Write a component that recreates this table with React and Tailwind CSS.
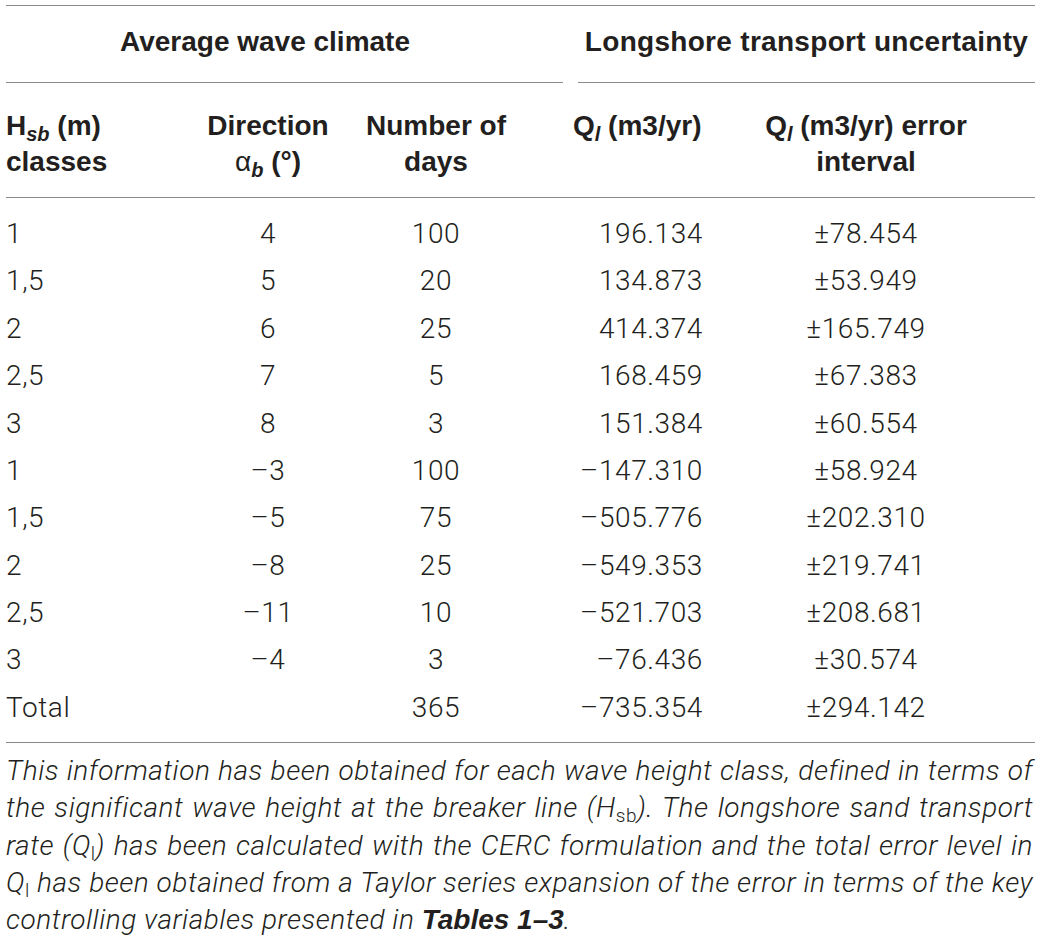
import React from "react";

const rows = [
  ["1", "4", "100", "196.134", "±78.454"],
  ["1,5", "5", "20", "134.873", "±53.949"],
  ["2", "6", "25", "414.374", "±165.749"],
  ["2,5", "7", "5", "168.459", "±67.383"],
  ["3", "8", "3", "151.384", "±60.554"],
  ["1", "–3", "100", "–147.310", "±58.924"],
  ["1,5", "–5", "75", "–505.776", "±202.310"],
  ["2", "–8", "25", "–549.353", "±219.741"],
  ["2,5", "–11", "10", "–521.703", "±208.681"],
  ["3", "–4", "3", "–76.436", "±30.574"],
  ["Total", "", "365", "–735.354", "±294.142"],
];

const grid = "grid grid-cols-[174px_176px_160px_187px_332px]";
const bodyFont = { fontFamily: "Roboto, 'Liberation Sans', sans-serif" };
const boldFont = { fontFamily: "'Liberation Sans', Arial, sans-serif" };

function Sub({ children, className = "" }) {
  return (
    <span className={"relative top-[6px] text-[20px] leading-none " + className}>
      {children}
    </span>
  );
}

export default function App() {
  return (
    <div className="w-[1043px] h-[940px] bg-white text-[#231f20] overflow-hidden">
      <div className="ml-[6px] w-[1029px] pt-[5px]">
        <div className="h-px bg-[#8a8a8a]" />

        {/* group header row */}
        <div className="flex font-bold text-[28px] leading-[36px]" style={boldFont}>
          <div className="w-[557px] border-b border-[#8a8a8a] pt-[18px] pb-[22px] pr-[39px] text-center">
            Average wave climate
          </div>
          <div className="w-[15px]" />
          <div className="flex-1 border-b border-[#8a8a8a] pt-[18px] pb-[22px] text-center whitespace-nowrap tracking-[0.3px]">
            Longshore transport uncertainty
          </div>
        </div>

        {/* column header row */}
        <div
          className={grid + " border-b border-[#8a8a8a] pt-[25px] pb-[17px] font-bold text-[28px] leading-[36px]"}
          style={boldFont}
        >
          <div className="text-left">
            <div className="whitespace-nowrap">
              H<Sub className="italic">sb</Sub> (m)
            </div>
            <div>classes</div>
          </div>
          <div className="text-center">
            <div>Direction</div>
            <div className="whitespace-nowrap">
              <span className="font-normal">α</span>
              <Sub className="italic">b</Sub> (°)
            </div>
          </div>
          <div className="text-center">
            <div>Number of</div>
            <div>days</div>
          </div>
          <div className="pl-[57px] whitespace-nowrap">
            Q<Sub className="italic">l</Sub> (m3/yr)
          </div>
          <div className="text-center pr-[6px]">
            <div className="whitespace-nowrap">
              Q<Sub className="italic">l</Sub> (m3/yr) error
            </div>
            <div>interval</div>
          </div>
        </div>

        {/* body */}
        <div
          className="border-b border-[#8a8a8a] pt-[12px] pb-[11px] text-[28px] font-light leading-[47.37px] tracking-[0.6px]"
          style={bodyFont}
        >
          {rows.map((r, i) => (
            <div key={i} className={grid}>
              <div className="text-left">{r[0]}</div>
              <div className="text-center">{r[1]}</div>
              <div className="text-center">{r[2]}</div>
              <div className="text-right">{r[3]}</div>
              <div className="text-center pr-[6px]">{r[4]}</div>
            </div>
          ))}
        </div>

        {/* caption */}
        <div
          className="w-[1027px] pt-[9px] text-[28px] font-light italic leading-[37.3px] tracking-[0.5px]"
          style={bodyFont}
        >
          <div className="text-justify [text-align-last:justify]">
            This information has been obtained for each wave height class, defined in terms of
          </div>
          <div className="text-justify [text-align-last:justify]">
            the significant wave height at the breaker line (H
            <span className="relative top-[5px] text-[19px] not-italic leading-none">sb</span>). The longshore sand transport
          </div>
          <div className="text-justify [text-align-last:justify]">
            rate (Q<span className="relative top-[5px] text-[19px] not-italic leading-none">l</span>) has been calculated with the CERC formulation and the total error level in
          </div>
          <div className="text-justify [text-align-last:justify]">
            Q<span className="relative top-[5px] text-[19px] not-italic leading-none">l</span> has been obtained from a Taylor series expansion of the error in terms of the key
          </div>
          <div className="text-left">
            controlling variables presented in{" "}
            <span className="font-bold tracking-normal" style={boldFont}>Tables 1–3</span>.
          </div>
        </div>
      </div>
    </div>
  );
}
